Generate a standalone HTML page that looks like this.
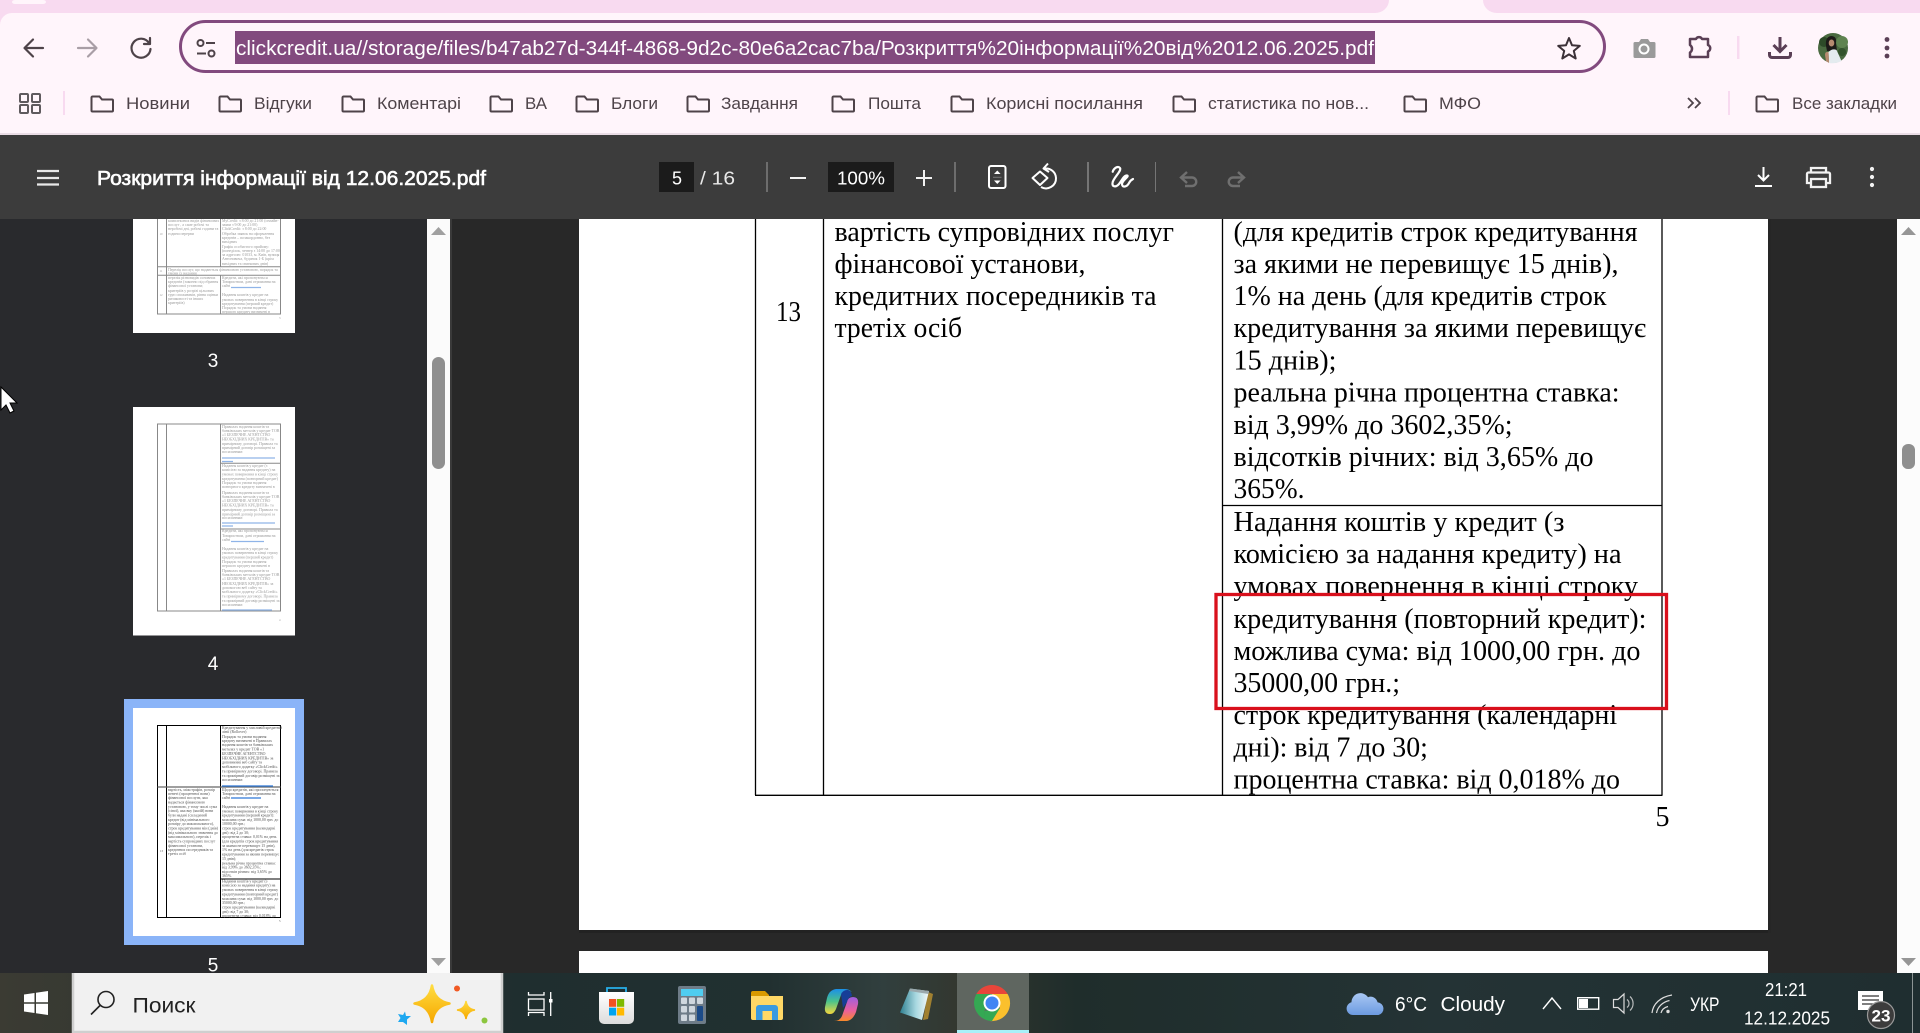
<!DOCTYPE html>
<html lang="uk">
<head>
<meta charset="utf-8">
<title>Розкриття інформації</title>
<style>
html,body{margin:0;padding:0;width:1920px;height:1033px;overflow:hidden;background:#282828}
svg{display:block}
.s{font-family:"Liberation Sans","Noto Sans CJK SC",sans-serif}
.t{font-family:"Liberation Serif","Noto Serif CJK SC",serif;fill:#000;font-size:28px}
.b{font-family:"Liberation Sans",sans-serif;font-size:16.5px;fill:#4e4349}
.th{font-family:"Liberation Serif",serif;font-size:3.9px}
.g{fill:#9a9a9a}.d{fill:#555}
</style>
</head>
<body>
<svg xmlns="http://www.w3.org/2000/svg" width="1920" height="1033" viewBox="0 0 1920 1033">
<defs>
<g id="f"><path d="M1.5 2.5a1 1 0 0 1 1-1h7l2.5 3h10a1 1 0 0 1 1 1v10a1 1 0 0 1-1 1h-19.500a1 1 0 0 1-1-1z" fill="none" stroke="#4e4349" stroke-width="2"/></g>
<linearGradient id="gold" x1="0" y1="0" x2="0" y2="1"><stop offset="0" stop-color="#ffdc40"/><stop offset="1" stop-color="#f6a800"/></linearGradient>
<linearGradient id="bag" x1="0" y1="0" x2="0" y2="1"><stop offset="0" stop-color="#ffffff"/><stop offset="1" stop-color="#dcdcdc"/></linearGradient>
<linearGradient id="cl" x1="0" y1="0" x2="0" y2="1"><stop offset="0" stop-color="#a9c8f4"/><stop offset="1" stop-color="#6c9ae0"/></linearGradient>
<linearGradient id="tb" x1="0" y1="0" x2="1" y2="0">
<stop offset="0" stop-color="#3b3b33"/><stop offset=".27" stop-color="#1f2e2f"/><stop offset=".4" stop-color="#213030"/><stop offset=".46" stop-color="#313f3e"/><stop offset=".5" stop-color="#33372f"/><stop offset=".56" stop-color="#1f2d2b"/><stop offset=".75" stop-color="#243335"/><stop offset="1" stop-color="#1f2e30"/></linearGradient>
<linearGradient id="cp1" x1="0" y1="0" x2="0" y2="1"><stop offset="0" stop-color="#1b8fe8"/><stop offset=".5" stop-color="#4cc38a"/><stop offset="1" stop-color="#f5d63d"/></linearGradient>
<linearGradient id="cp2" x1="0" y1="0" x2="0" y2="1"><stop offset="0" stop-color="#9d5fe0"/><stop offset=".55" stop-color="#ea5fa0"/><stop offset="1" stop-color="#f78a2a"/></linearGradient>
<linearGradient id="np" x1="0" y1="0" x2="1" y2="0"><stop offset="0" stop-color="#2f7f90"/><stop offset=".55" stop-color="#a8d8e0"/><stop offset="1" stop-color="#f4f8f8"/></linearGradient>
</defs>

<!-- browser chrome -->
<rect width="1920" height="135" fill="#fff5fb"/>
<path d="M46 0H1389a14 13 0 0 1-14 13H46z" fill="#f8daf0"/>
<path d="M0 0H46V13H12A12 12 0 0 0 0 25z" fill="#f8daf0"/>
<rect x="12" y="0" width="34" height="4" rx="3" fill="#fff5fb"/>
<path d="M1483 0H1920V13H1497a14 13 0 0 1-14-13z" fill="#f8daf0"/>
<rect y="133" width="1920" height="2" fill="#eadde6"/>

<!-- nav icons -->
<g fill="none" stroke="#4e4349" stroke-width="2.200" stroke-linecap="round" stroke-linejoin="round">
<path d="M43 48H25M33 39.500L24.500 48 33 56.500"/>
<path d="M78 48H96M88 39.500L96.500 48 88 56.500" stroke="#a99ea6"/>
<path d="M149 43a9.500 9.500 0 1 0 1.500 6M150 38v6h-6"/>
</g>
<rect x="180.500" y="21.500" width="1424" height="50" rx="25" fill="#fff5fb" stroke="#824a7e" stroke-width="3"/>
<g fill="none" stroke="#4e4349" stroke-width="2">
<circle cx="200.500" cy="43" r="3"/><path d="M206 43h9"/>
<circle cx="211.500" cy="53.500" r="3"/><path d="M197 53.500h9"/>
</g>
<rect x="235" y="31" width="1140" height="33" fill="#824a7e"/>
<text class="s" x="236" y="55" font-size="20" fill="#fff" textLength="1138" lengthAdjust="spacingAndGlyphs">clickcredit.ua//storage/files/b47ab27d-344f-4868-9d2c-80e6a2cac7ba/Розкриття%20інформації%20від%2012.06.2025.pdf</text>
<path d="M1569 38l3 7.300 7.800.6-6 5 1.900 7.600-6.700-4.100-6.700 4.100 1.900-7.600-6-5 7.800-.6z" fill="none" stroke="#3c3138" stroke-width="2" stroke-linejoin="round"/>

<!-- camera -->
<path d="M1635 42h4l2-3h7l2 3h4a1.500 1.500 0 0 1 1.500 1.500v13a1.500 1.500 0 0 1-1.500 1.500h-19a1.500 1.500 0 0 1-1.500-1.500v-13a1.500 1.500 0 0 1 1.500-1.500z" fill="#9a9a9a"/>
<circle cx="1644" cy="49" r="5.500" fill="#fff"/><circle cx="1644" cy="49" r="3.500" fill="#9a9a9a"/>
<!-- puzzle -->
<path d="M1690 39H1696a3.300 3.300 0 0 1 6 0H1708V45a3.500 3.500 0 0 1 0 6.500V57H1690V52.500a4.500 4.500 0 0 0 0-7.500z" fill="none" stroke="#5a3f55" stroke-width="2.500" stroke-linejoin="round"/>
<rect x="1737" y="36" width="2.500" height="23" fill="#f8daf0"/>
<!-- download -->
<path d="M1780 37V51M1773.500 45L1780 51.500 1786.500 45M1769.500 52v3a2.500 2.500 0 0 0 2.500 2.500h16a2.500 2.500 0 0 0 2.500-2.500v-3" fill="none" stroke="#5a3f55" stroke-width="3"/>
<!-- avatar -->
<circle cx="1833" cy="48" r="15" fill="#4a6a40"/>
<circle cx="1824" cy="42" r="5" fill="#2d4a28"/><circle cx="1842" cy="42" r="6" fill="#5f8350"/><circle cx="1842" cy="52" r="4" fill="#33532c"/>
<path d="M1826 46q-1-9 5-10 6 0 5 7l1 8h-10z" fill="#1d1a18"/>
<ellipse cx="1831.500" cy="43" rx="2.800" ry="3.500" fill="#b78a70"/>
<path d="M1829 63l-.5-11q4-4 8-2l5 11q-6 3-12.500 2z" fill="#e4ebef"/>
<path d="M1827 52q-2 0-2 3l1 6 3 2-.5-11z" fill="#b78a70"/>
<g fill="#5a3f55"><circle cx="1887" cy="39.500" r="2.400"/><circle cx="1887" cy="48" r="2.400"/><circle cx="1887" cy="56" r="2.400"/></g>

<!-- bookmarks -->
<g fill="none" stroke="#5f5a5e" stroke-width="2">
<rect x="20" y="94" width="8" height="8" rx="1"/><rect x="32" y="94" width="8" height="8" rx="1"/>
<rect x="20" y="105" width="8" height="8" rx="1"/><rect x="32" y="105" width="8" height="8" rx="1"/>
</g>
<rect x="63" y="91" width="2" height="24" fill="#f8daf0"/>
<use href="#f" x="90" y="95"/><text class="b" x="126" y="109" textLength="64" lengthAdjust="spacingAndGlyphs">Новини</text>
<use href="#f" x="218" y="95"/><text class="b" x="254" y="109" textLength="58" lengthAdjust="spacingAndGlyphs">Відгуки</text>
<use href="#f" x="341" y="95"/><text class="b" x="377" y="109" textLength="84" lengthAdjust="spacingAndGlyphs">Коментарі</text>
<use href="#f" x="489" y="95"/><text class="b" x="525" y="109" textLength="22" lengthAdjust="spacingAndGlyphs">ВА</text>
<use href="#f" x="575" y="95"/><text class="b" x="611" y="109" textLength="47" lengthAdjust="spacingAndGlyphs">Блоги</text>
<use href="#f" x="686" y="95"/><text class="b" x="721" y="109" textLength="77" lengthAdjust="spacingAndGlyphs">Завдання</text>
<use href="#f" x="831" y="95"/><text class="b" x="868" y="109" textLength="53" lengthAdjust="spacingAndGlyphs">Пошта</text>
<use href="#f" x="950" y="95"/><text class="b" x="986" y="109" textLength="157" lengthAdjust="spacingAndGlyphs">Корисні посилання</text>
<use href="#f" x="1172" y="95"/><text class="b" x="1208" y="109" textLength="161" lengthAdjust="spacingAndGlyphs">статистика по нов...</text>
<use href="#f" x="1403" y="95"/><text class="b" x="1439" y="109" textLength="42" lengthAdjust="spacingAndGlyphs">МФО</text>
<path d="M1688 98l5 5-5 5M1695 98l5 5-5 5" fill="none" stroke="#4e4349" stroke-width="1.800"/>
<rect x="1728" y="91" width="2" height="24" fill="#f8daf0"/>
<use href="#f" x="1755" y="95"/><text class="b" x="1792" y="109" textLength="105" lengthAdjust="spacingAndGlyphs">Все закладки</text>

<!-- viewer background -->
<rect y="219" width="1920" height="754" fill="#282828"/>
<rect y="135" width="1920" height="84" fill="#3c3c3c"/>
<rect y="219" width="428" height="754" fill="#292a2d"/>

<!-- pdf toolbar -->
<path d="M37 171H59M37 178H59M37 184.500H59" stroke="#e8e8e8" stroke-width="2.200"/>
<text class="s" x="97" y="185" font-size="20" fill="#fff" stroke="#fff" stroke-width=".6" textLength="389" lengthAdjust="spacingAndGlyphs">Розкриття інформації від 12.06.2025.pdf</text>
<rect x="659" y="162" width="35" height="30" fill="#1b1b1b"/>
<text class="s" x="672" y="184.500" font-size="18" fill="#fff">5</text>
<text class="s" x="700" y="184.500" font-size="18" fill="#e8e8e8" textLength="35" lengthAdjust="spacingAndGlyphs">/ 16</text>
<rect x="766" y="162" width="2" height="30" fill="#6d6d6d"/>
<path d="M790 178H806M916 178H932M924 170V186" stroke="#f2f2f2" stroke-width="2"/>
<rect x="828" y="162" width="66" height="30" fill="#1b1b1b"/>
<text class="s" x="837" y="184.500" font-size="18" fill="#fff" textLength="48" lengthAdjust="spacingAndGlyphs">100%</text>
<rect x="954" y="162" width="2" height="30" fill="#6d6d6d"/>
<rect x="989" y="166" width="16.500" height="22" rx="2" fill="none" stroke="#fff" stroke-width="2"/>
<path d="M994 174l3.300-3.500 3.300 3.500zM994 180.500l3.300 3.500 3.300-3.500z" fill="#fff"/>
<path d="M993 177.300h8.500" stroke="#777" stroke-width="1"/>
<g fill="none" stroke="#fff" stroke-width="2" stroke-linejoin="round">
<path d="M1032.500 178l7.500-6.500 7.500 6.500-7.500 7z"/>
<path d="M1045 168.500a10 10 0 0 1 11 9.500 10 10 0 0 1-15 9"/>
<path d="M1048 163.500l-4.500 5 5.500 3.500"/>
<path d="M1112.700 171.700C1114 168 1118 165.500 1120 168C1122 171 1113 178 1112.500 183C1112 187 1116 187.500 1119 184C1121.500 181 1124 175 1127 175.500C1130 176 1122 180.500 1122 184C1122 188 1127 187 1129 183C1130 181 1131 180 1133 179" stroke-linecap="round" stroke-width="2.200"/>
</g>
<rect x="1087" y="162" width="2" height="30" fill="#757575"/>
<rect x="1155" y="162" width="1" height="30" fill="#757575"/>
<g fill="none" stroke="#6f6f6f" stroke-width="2.400">
<path d="M1187 172l-6 5.500 6 5.500M1181 177.500h11a4.200 4.200 0 0 1 0 8.500h-7"/>
<path d="M1238 172l6 5.500-6 5.500M1244 177.500h-11a4.200 4.200 0 0 0 0 8.500h7"/>
</g>
<path d="M1763.500 167V180M1758 175l5.500 5.500 5.500-5.500M1755 186h17" fill="none" stroke="#fff" stroke-width="2"/>
<g fill="none" stroke="#f2f2f2" stroke-width="2.300">
<path d="M1811 173v-5h15v5M1811 183h-4v-9a1.500 1.500 0 0 1 1.500-1.500h20a1.500 1.500 0 0 1 1.500 1.500v9h-4"/>
<rect x="1811" y="179" width="15" height="8"/>
</g>
<g fill="#f2f2f2"><circle cx="1872" cy="169" r="2.100"/><circle cx="1872" cy="177" r="2.100"/><circle cx="1872" cy="185" r="2.100"/></g>

<!-- sidebar scrollbar -->
<rect x="427" y="219" width="23" height="754" fill="#fbfbfb"/>
<rect x="450" y="219" width="2" height="754" fill="#3a3a3a"/>
<path d="M431 235L438.500 227 446 235z" fill="#a0a0a0"/>
<path d="M431 958L438.500 966 446 958z" fill="#a0a0a0"/>
<rect x="432" y="357" width="13" height="112" rx="6.500" fill="#8f8f8f"/>

<!-- thumbnail 3 -->
<rect x="133" y="219" width="162" height="114" fill="#fff"/>
<g fill="none" stroke="#888" stroke-width="1">
<path d="M157.500 219V314H280.500V219M166.500 219V314M220.500 219V266.500M220.500 275.500V314M157.500 266.700H280.500M157.500 275.300H280.500"/>
</g>
<g class="th g">
<text x="168" y="222">комплексних видів фінансових</text><text x="168" y="226">послуг , а саме робочі та</text><text x="168" y="230">неробочі дні, робочі години та</text><text x="168" y="235">години перерви</text>
<text x="222" y="222">МуCredit: з 8:00 до 21:00 (онлайн-</text><text x="222" y="226">заяви з 9:00 до 21:00)</text><text x="222" y="230">ClickCredit: з 8:00 до 22:00</text>
<text x="222" y="235">Обробка заявок на оформлення</text><text x="222" y="239">кредитів – позакордонно, без</text><text x="222" y="243">вихідних</text>
<text x="222" y="248">Графік особистого прийому:</text><text x="222" y="252">(понеділок, четвер з 14:00 до 17:00</text><text x="222" y="256">за адресою: 01033, м. Київ, вулиця</text><text x="222" y="260">Антоновича, будинок 1-Б (крім</text><text x="222" y="265">вихідних та святкових днів)</text>
<text x="168" y="271">Перелік послуг, що надаються фінансовою установою, порядок та</text><text x="168" y="274.500">умови їх надання</text>
<text x="159.500" y="272" font-size="3">11</text><text x="159.500" y="296" font-size="3">12</text><text x="159.500" y="235" font-size="3">10</text>
<text x="168" y="279">перелік різновидів основних</text><text x="168" y="283">кредитів (законно під обрання</text><text x="168" y="287">фінансової установи;</text><text x="168" y="292">критеріїв у розрізі цільових</text><text x="168" y="296">груп споживачів, рівня оцінки</text><text x="168" y="300">ризиковості та інших</text><text x="168" y="304">критеріїв)</text>
<text x="222" y="279">Кредити, які пропонуються</text><text x="222" y="283">Товариством, дані отримання на</text><text x="222" y="287">сайті</text>
<text x="222" y="296">Надання коштів у кредит на</text><text x="222" y="301">умовах повернення в кінці строку</text><text x="222" y="305">кредитування (перший кредит)</text><text x="222" y="309">Порядок та умови надання</text><text x="222" y="313">першого кредиту визначені в</text>
<text x="279" y="319" font-size="3">3</text>
</g>
<path d="M231 287.500H261" stroke="#8fb4e8" stroke-width="1.200"/>
<text class="s" x="213" y="367" font-size="19" fill="#fff" text-anchor="middle">3</text>

<!-- thumbnail 4 -->
<rect x="133" y="407" width="162" height="228.500" fill="#fff"/>
<path d="M157.500 424H280.500V611H157.500zM166.500 424V611M220.500 424V611M220.500 463.300H280.500M220.500 529H280.500" fill="none" stroke="#888" stroke-width="1"/>
<g class="th g">
<text x="222" y="428">Правилах надання коштів та</text><text x="222" y="432">банківських металів у кредит ТОВ</text><text x="222" y="436">«1 БЕЗПЕЧНЕ АГЕНТСТВО</text><text x="222" y="440.500">НЕОБХІДНИХ КРЕДИТІВ» та</text><text x="222" y="445">примірному договорі. Правила та</text><text x="222" y="449">примірний договір розміщені за</text><text x="222" y="453">посиланням:</text>
<text x="222" y="467">Надання коштів у кредит (з</text><text x="222" y="471">комісією за надання кредиту) на</text><text x="222" y="475.500">умовах повернення в кінці строку</text><text x="222" y="480">кредитування (повторний кредит)</text><text x="222" y="484">Порядок та умови надання</text><text x="222" y="488">повторного кредиту визначені в</text>
<text x="222" y="494">Правилах надання коштів та</text><text x="222" y="498">банківських металів у кредит ТОВ</text><text x="222" y="502">«1 БЕЗПЕЧНЕ АГЕНТСТВО</text><text x="222" y="506.500">НЕОБХІДНИХ КРЕДИТІВ» та</text><text x="222" y="511">примірному договорі. Правила та</text><text x="222" y="515.500">примірний договір розміщені за</text><text x="222" y="519">посиланням:</text>
<text x="222" y="532">Кредити, які пропонуються</text><text x="222" y="537">Товариством, дані отримання на</text><text x="222" y="541">сайті</text>
<text x="222" y="550">Надання коштів у кредит на</text><text x="222" y="554">умовах повернення в кінці строку</text><text x="222" y="558.500">кредитування (перший кредит)</text><text x="222" y="563">Порядок та умови надання</text><text x="222" y="567">першого кредиту визначені в</text>
<text x="222" y="572">Правилах надання коштів та</text><text x="222" y="576">банківських металів у кредит ТОВ</text><text x="222" y="580">«1 БЕЗПЕЧНЕ АГЕНТСТВО</text><text x="222" y="585">НЕОБХІДНИХ КРЕДИТІВ» за</text><text x="222" y="589">допомогою веб сайту та</text><text x="222" y="593">мобільного додатку «ClickCredit»</text><text x="222" y="597.500">та примірному договорі. Правила</text><text x="222" y="602">та примірний договір розміщені за</text><text x="222" y="606">посиланням:</text>
<text x="279" y="621" font-size="3">4</text>
</g>
<path d="M222 458H275M222 461.500H233M222 523H275M222 526H233M231 541.500H264M222 610H272" stroke="#8fb4e8" stroke-width="1.200"/>
<text class="s" x="213" y="670" font-size="19" fill="#fff" text-anchor="middle">4</text>

<!-- thumbnail 5 -->
<rect x="124" y="699" width="180" height="246" fill="#8ab4f8"/>
<rect x="133" y="708" width="162" height="228" fill="#fff"/>
<path d="M157.500 725.500H280.500V917.500H157.500zM166.500 725.500V917.500M220.500 725.500V917.500M220.500 879H280.500" fill="none" stroke="#000" stroke-width="1"/>
<path d="M157.500 787H280.500" stroke="#666" stroke-width="1.200"/>
<path d="M222 786H273M231 798H261" stroke="#2e78d8" stroke-width="1.300"/>
<g class="th d">
<text x="222" y="729">Кредитування у мисливій кредитній</text><text x="222" y="733">лінії (Rollover)</text><text x="222" y="738">Порядок та умови надання</text><text x="222" y="742">кредиту визначені в Правилах</text><text x="222" y="746">надання коштів та банківських</text><text x="222" y="750.500">металах у кредит ТОВ «1</text><text x="222" y="755">БЕЗПЕЧНЕ АГЕНТСТВО</text><text x="222" y="759.500">НЕОБХІДНИХ КРЕДИТІВ» за</text><text x="222" y="763.500">доповненні веб сайту та</text><text x="222" y="768">мобільного додатку «ClickCredit»</text><text x="222" y="772.500">та примірному договорі. Правила</text><text x="222" y="777">та примірний договір розміщені за</text><text x="222" y="781">посиланням:</text>
<text x="222" y="791">Щодо кредитів, які пропонуються</text><text x="222" y="795">Товариством, дані отримання на</text><text x="222" y="799">сайті</text>
<text x="222" y="808">Надання коштів у кредит на</text><text x="222" y="812.500">умовах повернення в кінці строку</text><text x="222" y="816.500">кредитування (перший кредит):</text><text x="222" y="821">можлива сума: від 1000,00 грн. до</text><text x="222" y="825">10000,00 грн.;</text><text x="222" y="829.500">строк кредитування (календарні</text><text x="222" y="834">дні): від 2 до 30;</text><text x="222" y="838">процентна ставка: 0,01% на день</text><text x="222" y="842.500">(для кредитів строк кредитування</text><text x="222" y="847">за якими не перевищує 15 днів),</text><text x="222" y="851">1% на день (для кредитів строк</text><text x="222" y="855.500">кредитування за якими перевищує</text><text x="222" y="860">15 днів);</text><text x="222" y="864.500">реальна річна процентна ставка:</text><text x="222" y="868.500">від 3,99% до 3602,35%;</text><text x="222" y="873">відсотків річних: від 3,65% до</text><text x="222" y="877">365%.</text>
<text x="222" y="882.500">Надання коштів у кредит (з</text><text x="222" y="886.500">комісією за надання кредиту) на</text><text x="222" y="891">умовах повернення в кінці строку</text><text x="222" y="895.500">кредитування (повторний кредит)</text><text x="222" y="900">можлива сума: від 1000,00 грн. до</text><text x="222" y="904">35000,00 грн.;</text><text x="222" y="908.500">строк кредитування (календарні</text><text x="222" y="913">дні): від 7 до 30;</text><text x="222" y="917">процентна ставка: від 0,018% до</text>
<text x="168" y="791">вартість, міжстрафів, розмір</text><text x="168" y="795">пенеті (процентної вони)</text><text x="168" y="799">фінансової послуги, яка</text><text x="168" y="803.500">надається фінансовою</text><text x="168" y="808">установою, у тому числі сума</text><text x="168" y="812">(сівої), яка вку (якоїй) вони</text><text x="168" y="816.500">були надані (складений</text><text x="168" y="821">кредит (від мінімального</text><text x="168" y="825">розміру до максимального),</text><text x="168" y="829.500">строк кредитування мін (днів)</text><text x="168" y="834">(від мінімального значення до</text><text x="168" y="838">максимального), перелік і</text><text x="168" y="842.500">вартість супровідних послуг</text><text x="168" y="847">фінансової установи,</text><text x="168" y="851">кредитних посередників та</text><text x="168" y="855">третіх осіб</text>
<text x="160" y="852" font-size="3">13</text><text x="279" y="922" font-size="3">5</text>
</g>
<text class="s" x="213" y="971.500" font-size="19" fill="#fff" text-anchor="middle">5</text>

<!-- main PDF page -->
<rect x="579" y="219" width="1189" height="711" fill="#fff"/>
<rect x="579" y="930" width="1189" height="3" fill="#222"/>
<rect x="1768" y="219" width="3" height="714" fill="#262626"/>
<rect x="579" y="951" width="1189" height="22" fill="#fff"/>
<path d="M755.500 219V795M823.500 219V795M1222.500 219V795M1662 219V795M755 795.300H1662.500M1222.500 505.500H1662" stroke="#000" stroke-width="1.300" fill="none"/>
<text class="t" x="776" y="321" textLength="25" lengthAdjust="spacingAndGlyphs">13</text>
<g class="t">
<text x="834.500" y="241" textLength="339.500" lengthAdjust="spacingAndGlyphs">вартість супровідних послуг</text>
<text x="834.500" y="273" textLength="251" lengthAdjust="spacingAndGlyphs">фінансової установи,</text>
<text x="834.500" y="305" textLength="322" lengthAdjust="spacingAndGlyphs">кредитних посередників та</text>
<text x="834.500" y="337" textLength="127.500" lengthAdjust="spacingAndGlyphs">третіх осіб</text>
<text x="1233.500" y="241" textLength="404" lengthAdjust="spacingAndGlyphs">(для кредитів строк кредитування</text>
<text x="1233.500" y="273" textLength="385" lengthAdjust="spacingAndGlyphs">за якими не перевищує 15 днів),</text>
<text x="1233.500" y="305" textLength="373" lengthAdjust="spacingAndGlyphs">1% на день (для кредитів строк</text>
<text x="1233.500" y="337" textLength="412.500" lengthAdjust="spacingAndGlyphs">кредитування за якими перевищує</text>
<text x="1233.500" y="369.500" textLength="103" lengthAdjust="spacingAndGlyphs">15 днів);</text>
<text x="1233.500" y="401.500" textLength="386" lengthAdjust="spacingAndGlyphs">реальна річна процентна ставка:</text>
<text x="1233.500" y="434" textLength="279" lengthAdjust="spacingAndGlyphs">від 3,99% до 3602,35%;</text>
<text x="1233.500" y="466" textLength="360" lengthAdjust="spacingAndGlyphs">відсотків річних: від 3,65% до</text>
<text x="1233.500" y="498" textLength="71" lengthAdjust="spacingAndGlyphs">365%.</text>
<text x="1233.500" y="531" textLength="331" lengthAdjust="spacingAndGlyphs">Надання коштів у кредит (з</text>
<text x="1233.500" y="563" textLength="388" lengthAdjust="spacingAndGlyphs">комісією за надання кредиту) на</text>
<text x="1233.500" y="595" textLength="404.500" lengthAdjust="spacingAndGlyphs">умовах повернення в кінці строку</text>
<text x="1233.500" y="628" textLength="413" lengthAdjust="spacingAndGlyphs">кредитування (повторний кредит):</text>
<text x="1233.500" y="660" textLength="407" lengthAdjust="spacingAndGlyphs">можлива сума: від 1000,00 грн. до</text>
<text x="1233.500" y="692" textLength="166.500" lengthAdjust="spacingAndGlyphs">35000,00 грн.;</text>
<text x="1233.500" y="724" textLength="383.700" lengthAdjust="spacingAndGlyphs">строк кредитування (календарні</text>
<text x="1233.500" y="756.500" textLength="194.400" lengthAdjust="spacingAndGlyphs">дні): від 7 до 30;</text>
<text x="1233.500" y="788.500" textLength="386.500" lengthAdjust="spacingAndGlyphs">процентна ставка: від 0,018% до</text>
<text x="1655.500" y="826">5</text>
</g>
<rect x="1216" y="594.500" width="450.500" height="114" fill="none" stroke="#d9101c" stroke-width="3.300"/>

<!-- main scrollbar -->
<rect x="1897" y="219" width="23" height="754" fill="#fcfcfc"/>
<path d="M1901 235L1908.500 227 1916 235z" fill="#969696"/>
<path d="M1901 958L1908.500 966 1916 958z" fill="#969696"/>
<rect x="1902" y="444" width="13" height="25" rx="6" fill="#8f8f8f"/>

<!-- cursor -->
<path d="M1 387V410L6 405 10 413 14 411 10 403 17 403z" fill="#fff" stroke="#000" stroke-width="1"/>

<!-- taskbar -->
<rect y="973" width="1920" height="60" fill="url(#tb)"/>
<g fill="#fff">
<path d="M24 994.500L34.500 993V1002.300H24zM36 992.800L48 991V1002.300H36zM24 1003.700H34.500V1013L24 1011.500zM36 1003.700H48V1015L36 1013.300z"/>
</g>
<rect x="72" y="973" width="431" height="60" fill="#f1f1f1"/>
<path d="M73 973V1032H502V973" fill="none" stroke="#cfcfcf" stroke-width="2.500"/>
<circle cx="106" cy="999.500" r="8" fill="none" stroke="#222" stroke-width="1.600"/>
<path d="M100 1005.500L91 1014.500" stroke="#222" stroke-width="1.600"/>
<text class="s" x="132.500" y="1012.500" font-size="21" fill="#222" textLength="63" lengthAdjust="spacingAndGlyphs">Поиск</text>
<path d="M432 985.500Q434.500 1001 449.500 1003.500 434.500 1006 432 1022 429.500 1006 414.500 1003.500 429.500 1001 432 985.500z" fill="url(#gold)" stroke="url(#gold)" stroke-width="2.500" stroke-linejoin="round"/>
<path d="M466 1001Q467 1009 475 1010 467 1011 466 1019 465 1011 457 1010 465 1009 466 1001z" fill="url(#gold)" stroke="url(#gold)" stroke-width="1.500"/>
<path d="M405 1011.500L406 1016 411 1016 407 1019.500 407 1025 403 1022 398 1022 400.500 1018 398 1014 403 1015z" fill="#1ea8f0"/>
<circle cx="457" cy="988.500" r="3" fill="#f15a24"/>
<circle cx="484.500" cy="1020.500" r="3" fill="#8cc63f"/>
<!-- task view -->
<g fill="none" stroke="#fff" stroke-width="1.300">
<rect x="528.500" y="999" width="15.500" height="11"/>
<path d="M528.500 992v3h15.500v-3M528.500 1016v-3.500h15.500v3.500M550.700 992V1016"/>
</g>
<rect x="549" y="999" width="3.500" height="3.500" fill="#fff"/>
<!-- store -->
<path d="M607 994V988H626V994" fill="none" stroke="#27b0ea" stroke-width="1.800"/>
<path d="M599 992H634V1019a5 5 0 0 1-5 5H604a5 5 0 0 1-5-5z" fill="url(#bag)"/>
<rect x="609" y="999" width="7.200" height="7.800" fill="#f25022"/><rect x="617" y="999" width="7.200" height="7.800" fill="#7fba00"/>
<rect x="609" y="1007.700" width="7.200" height="7.800" fill="#00a4ef"/><rect x="617" y="1007.700" width="7.200" height="7.800" fill="#ffb900"/>
<!-- calc -->
<rect x="678" y="986" width="28" height="38" rx="2" fill="#6e7c88"/>
<rect x="681" y="989" width="22" height="7" fill="#4fcdf0"/>
<g fill="#cfd7de">
<rect x="681" y="997.500" width="6" height="6.500" rx="1"/><rect x="689" y="997.500" width="6" height="6.500" rx="1"/><rect x="697" y="997.500" width="6" height="6.500" rx="1"/>
<rect x="681" y="1006" width="6" height="6.500" rx="1"/><rect x="689" y="1006" width="6" height="6.500" rx="1"/>
<rect x="681" y="1014.500" width="6" height="6.500" rx="1"/><rect x="689" y="1014.500" width="6" height="6.500" rx="1"/>
</g>
<rect x="697" y="1006" width="6" height="15" rx="1" fill="#1c4b88"/>
<!-- explorer -->
<path d="M751 993a2 2 0 0 1 2-2h12l4 4v5H751z" fill="#d99a00"/>
<path d="M751 1018V996H783V1018a2 2 0 0 1-2 2H753a2 2 0 0 1-2-2z" fill="#ffd866"/>
<path d="M756 1020V1008a3 3 0 0 1 3-3H775a3 3 0 0 1 3 3V1020H772V1011H762.500V1020z" fill="#3a9ae0"/>
<!-- copilot -->
<path d="M836 989Q829 990 827 998L825 1007Q824 1014 830 1014 834 1014 836 1009L841 995Q843 990 848 990L852 992Q849 989 845 989z" fill="url(#cp1)"/>
<path d="M847 1021Q853 1020 856 1012L858 1004Q859 997 853 997 848 997 847 1002L842 1016Q840 1021 834 1021z" fill="url(#cp2)"/>
<path d="M841 994Q843 990 847 990 851 990 852 996 848 997 847 1002L843 1008z" fill="#143fa8" opacity=".85"/>
<!-- notepad -->
<path d="M928 992L933 994 928 1019 923 1020z" fill="#a08030"/>
<path d="M910 988.500L929 991 922 1020 900 1012.500z" fill="url(#np)"/>
<path d="M910 988.500L929 991 928.500 994 909 991z" fill="#9aa8ac"/>
<!-- chrome -->
<rect x="957" y="973" width="72" height="60" fill="#5f6660"/>
<rect x="957" y="1030" width="72" height="3" fill="#a8f0f8"/>
<path d="M976.400 994A18 18 0 0 1 1007.600 994L992 994z" fill="#e8453a"/>
<path d="M976.400 994L992 994 984.200 1011.500 984 1019A18 18 0 0 1 976.400 994z" fill="#34a853"/>
<path d="M1007.600 994A18 18 0 0 1 990 1021L1000 1008 992 994z" fill="#fbc02d"/>
<path d="M984 1019A18 18 0 0 0 992 1021L1000 1008 984.200 1011z" fill="#34a853"/>
<circle cx="992" cy="1003" r="8.500" fill="#fff"/><circle cx="992" cy="1003" r="6.500" fill="#4285f4"/>
<!-- weather -->
<path d="M1353 1015a6.500 6.500 0 0 1-1.500-12.800 9 9 0 0 1 16.500-5 7 7 0 0 1 9.500 5 6.500 6.500 0 0 1 1 12.800z" fill="url(#cl)"/>
<text class="s" x="1395" y="1011" font-size="20" fill="#fff" textLength="32" lengthAdjust="spacingAndGlyphs">6°C</text>
<text class="s" x="1440.500" y="1011" font-size="20" fill="#fff" textLength="64.500" lengthAdjust="spacingAndGlyphs">Cloudy</text>
<path d="M1543 1009L1552 998 1561 1009" fill="none" stroke="#fff" stroke-width="1.400"/>
<rect x="1577.700" y="997.700" width="21" height="11.500" fill="none" stroke="#fff" stroke-width="1.400"/>
<rect x="1579" y="999" width="9" height="9" fill="#fff"/>
<g fill="none" stroke="#ddd" stroke-width="1.200">
<path d="M1613.500 999.500H1618L1624 994V1013L1618 1007.500H1613.500z"/>
<path d="M1627 999.500a5 5 0 0 1 0 8M1630 996.500a9.500 9.500 0 0 1 0 14" opacity=".8"/>
<path d="M1652 1013c1-9 8-16 20-18M1656.500 1013c1-6 6-11 13-12.500M1661 1013c.8-3 3-5.500 7-6.500"/>
</g>
<circle cx="1668" cy="1011.500" r="1.700" fill="#ddd"/>
<text class="s" x="1690" y="1011" font-size="19" fill="#fff" textLength="29.500" lengthAdjust="spacingAndGlyphs">УКР</text>
<text class="s" x="1765" y="996" font-size="18.500" fill="#fff" textLength="42" lengthAdjust="spacingAndGlyphs">21:21</text>
<text class="s" x="1744" y="1024.500" font-size="18.500" fill="#fff" textLength="86" lengthAdjust="spacingAndGlyphs">12.12.2025</text>
<rect x="1858" y="991" width="25" height="19" fill="#fff"/>
<path d="M1862 996H1879M1862 1000H1879M1862 1004H1873" stroke="#333" stroke-width="1.200"/>
<circle cx="1881" cy="1015" r="13.500" fill="#3c3c3c" stroke="#9a9a9a" stroke-width="1.200"/>
<text class="s" x="1881" y="1021.500" font-size="17" font-weight="bold" fill="#fff" text-anchor="middle" textLength="19" lengthAdjust="spacingAndGlyphs">23</text>
<rect x="1912" y="973" width="1" height="60" fill="#8c9494"/>
</svg>
</body>
</html>
